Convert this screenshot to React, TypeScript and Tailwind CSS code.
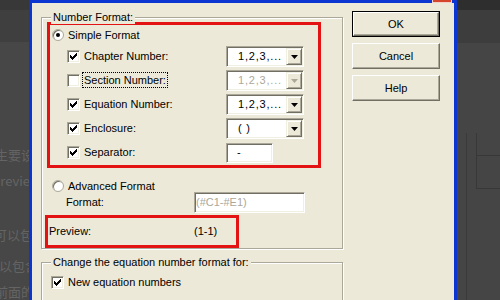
import React from "react";

const TICK = [
  [6, 0], [5, 1], [6, 1], [0, 2], [4, 2], [5, 2], [6, 2],
  [0, 3], [1, 3], [3, 3], [4, 3], [5, 3],
  [0, 4], [1, 4], [2, 4], [3, 4], [4, 4],
  [1, 5], [2, 5], [3, 5], [2, 6],
];

const sunken =
  "border border-t-[#aca899] border-l-[#aca899] border-b-white border-r-white shadow-[inset_1px_1px_0_#716f64,inset_-1px_-1px_0_#f1efe2]";

const Check = ({ checked }: { checked: boolean }) => (
  <span className={`flex h-[13px] w-[13px] shrink-0 bg-white pl-[2px] pt-[2px] ${sunken}`}>
    {checked && (
      <svg width="7" height="7" viewBox="0 0 7 7" shapeRendering="crispEdges">
        {TICK.map(([x, y]) => (
          <rect key={`${x}-${y}`} x={x} y={y} width="1" height="1" fill="#000" />
        ))}
      </svg>
    )}
  </span>
);

const Radio = ({ on }: { on?: boolean }) => (
  <span className="flex h-[12px] w-[12px] shrink-0 items-center justify-center rounded-full border border-[#aca899] bg-white shadow-[inset_1px_1px_0_#716f64]">
    {on && <span className="h-[4px] w-[4px] rounded-full bg-black" />}
  </span>
);

const Combo = ({ value, disabled }: { value: string; disabled?: boolean }) => (
  <div className={`flex h-[21px] w-[78px] bg-white p-[1px] ${sunken}`}>
    <span className={`flex flex-1 items-center pl-[10px] tracking-[0.8px] ${disabled ? "text-[#aca899]" : ""}`}>
      {value}
    </span>
    <span className="flex w-[16px] items-center justify-center border border-t-[#f1efe2] border-l-[#f1efe2] border-b-[#716f64] border-r-[#716f64] bg-[#ece9d8] shadow-[inset_1px_1px_0_#fff,inset_-1px_-1px_0_#aca899]">
      <svg width="7" height="4" viewBox="0 0 7 4">
        <path d="M0 0h7L3.5 4z" fill={disabled ? "#aca899" : "#000"} />
      </svg>
    </span>
  </div>
);

const Field = ({ value, width, muted, className = "" }: { value: string; width: string; muted?: boolean; className?: string }) => (
  <div className={`flex items-center bg-white p-[1px] ${sunken} ${width} ${muted ? "text-[#aca899]" : ""} ${className}`}>
    {value}
  </div>
);

const Row = ({ label, checked, focus, children }: { label: string; checked: boolean; focus?: boolean; children: React.ReactNode }) => (
  <div className="flex h-[21px] items-center pl-[17px]">
    <Check checked={checked} />
    <div className="ml-[4px] w-[142px]">
      <span className={focus ? "outline-1 outline-offset-[1px] outline-dotted outline-black" : ""}>{label}</span>
    </div>
    {children}
  </div>
);

const Group = ({ title, className = "", children }: { title: string; className?: string; children: React.ReactNode }) => (
  <div className={`relative border border-[#aca899] shadow-[1px_1px_0_#fff,inset_1px_1px_0_#fff] ${className}`}>
    <span className="absolute -top-[7px] left-[9px] bg-[#ece9d8] px-[2px]">{title}</span>
    {children}
  </div>
);

const Btn = ({ label, primary }: { label: string; primary?: boolean }) => {
  const face = (
    <div className="flex h-full items-center justify-center border border-t-white border-l-white border-b-[#716f64] border-r-[#716f64] bg-[#ece9d8] shadow-[inset_-1px_-1px_0_#aca899]">
      {label}
    </div>
  );
  return <div className={`h-[26px] ${primary ? "border border-black" : ""}`}>{face}</div>;
};

const LeftBackdrop = () => (
  <div className="flex w-[29px] shrink-0 flex-col overflow-hidden">
    <div className="h-[10px] bg-[#383838]" />
    <div className="h-[33px] bg-[#3f3f3f]" />
    <div className="flex flex-1 flex-col bg-[#474747] pt-[105px] font-['Noto_Sans_CJK_SC',sans-serif] text-[13px] leading-[16px] text-[#646464]">
      <div className="-ml-[5px] whitespace-nowrap">生要设置</div>
      <div className="-ml-[8px] mt-[10px] whitespace-nowrap">Preview</div>
      <div className="-ml-[6px] mt-[38px] whitespace-nowrap">可以包含</div>
      <div className="-ml-[1px] mt-[15px] whitespace-nowrap">以包含的</div>
      <div className="-ml-[5px] mt-[10px] whitespace-nowrap">前面的</div>
    </div>
  </div>
);

const RightBackdrop = () => (
  <div className="flex flex-1 flex-col">
    <div className="h-[10px] bg-[#2e2e2e]" />
    <div className="h-[33px] bg-[#3d3d3d]" />
    <div className="flex-1 bg-[#454545] pl-[9px] pt-[90px]">
      <div className="h-full border-l border-[#3a3a3a] pl-[9px]">
        <div className="h-[23px] border-b border-l border-[#383838]" />
        <div className="h-[33px] border-b border-l border-[#383838]" />
      </div>
    </div>
  </div>
);

const Dialog = () => (
  <div className="flex w-[428px] shrink-0 flex-col border-x-[3px] border-[#0b36d1] bg-[#ece9d8]">
    <div className="flex h-[5px] justify-end bg-[#0b36d1]">
      <div className="mr-[2px] h-[3px] w-[20px] border-x border-b border-[#f3d0c8] bg-[#d4452c]" />
    </div>
    <div className="flex items-start pl-[9px] pt-[8px]">
      <div className="flex w-[302px] flex-col">
        <Group title="Number Format:" className="mt-[6px]">
          <div className="flex h-[230px] flex-col">
            <div className="ml-[5px] mt-[4px] flex h-[146px] w-[274px] flex-col border-[3px] border-[#e31313]">
              <div className="flex h-[20px] items-center pl-[2px]">
                <Radio on />
                <span className="ml-[4px]">Simple Format</span>
              </div>
              <div className="mt-[1px] flex flex-col gap-[3px]">
                <Row label="Chapter Number:" checked>
                  <Combo value="1,2,3,..." />
                </Row>
                <Row label="Section Number:" checked={false} focus>
                  <Combo value="1,2,3,..." disabled />
                </Row>
                <Row label="Equation Number:" checked>
                  <Combo value="1,2,3,..." />
                </Row>
                <Row label="Enclosure:" checked>
                  <Combo value="( )" />
                </Row>
                <Row label="Separator:" checked>
                  <Field value="-" width="w-[47px] h-[20px]" className="pl-[10px]" />
                </Row>
              </div>
            </div>
            <div className="mt-[12px] flex h-[12px] items-center pl-[10px]">
              <Radio />
              <span className="ml-[4px]">Advanced Format</span>
            </div>
            <div className="flex h-[21px] items-center pl-[24px]">
              <span className="w-[128px]">Format:</span>
              <Field value="(#C1-#E1)" width="w-[111px] h-[21px]" muted />
            </div>
            <div className="ml-[3px] mt-[2px] flex h-[33px] w-[194px] items-center border-[3px] border-[#e31313] pl-[1px]">
              <span className="w-[145px]">Preview:</span>
              <span>(1-1)</span>
            </div>
          </div>
        </Group>
        <Group title="Change the equation number format for:" className="mt-[13px] h-[60px]">
          <div className="flex items-center pl-[9px] pt-[13px]">
            <Check checked />
            <span className="ml-[4px]">New equation numbers</span>
          </div>
        </Group>
      </div>
      <div className="ml-[9px] flex w-[88px] flex-col gap-[6px]">
        <Btn label="OK" primary />
        <Btn label="Cancel" />
        <Btn label="Help" />
      </div>
    </div>
  </div>
);

export default function App() {
  return (
    <div className="flex h-[300px] w-[500px] overflow-hidden bg-[#464646] font-['Liberation_Sans',Arial,sans-serif] text-[11px] leading-[13px] text-black">
      <LeftBackdrop />
      <Dialog />
      <RightBackdrop />
    </div>
  );
}
